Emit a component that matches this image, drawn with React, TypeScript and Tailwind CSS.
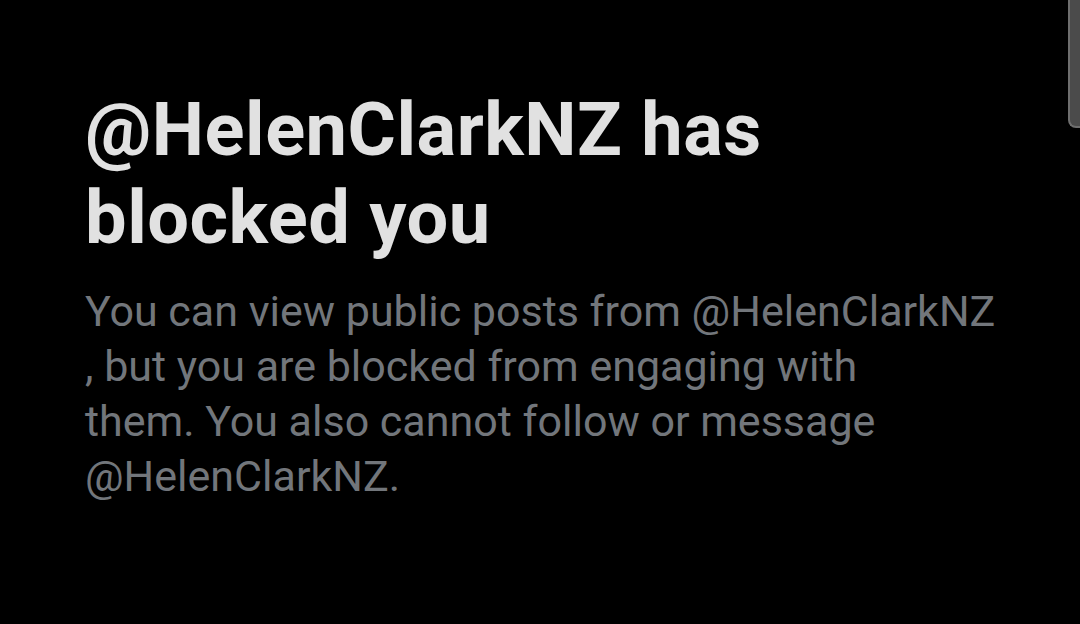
import React from 'react';

const App: React.FC = () => {
  return (
    <div className="relative w-[1080px] h-[624px] overflow-hidden bg-black" style={{ fontFamily: 'Roboto, "Liberation Sans", sans-serif' }}>
      {/* scrollbar thumb */}
      <div className="absolute right-0 top-0 w-[12px] h-[128px] bg-[#4b4b4b] border-l-2 border-b-2 border-[#6e6e6e] rounded-bl-[8px]" />

      <div className="pl-[85px] pt-[86px]">
        <h1 className="text-[74px] leading-[88px] font-bold text-[#e1e1e1] tracking-[0.5px]">
          <span className="block">@HelenClarkNZ has</span>
          <span className="block">blocked you</span>
        </h1>
        <p className="mt-[22px] text-[43px] leading-[55px] text-[#72767b] tracking-[0px]">
          <span className="block">You can view public posts from @HelenClarkNZ</span>
          <span className="block">, but you are blocked from engaging with</span>
          <span className="block">them. You also cannot follow or message</span>
          <span className="block">@HelenClarkNZ.</span>
        </p>
      </div>
    </div>
  );
};

export default App;
